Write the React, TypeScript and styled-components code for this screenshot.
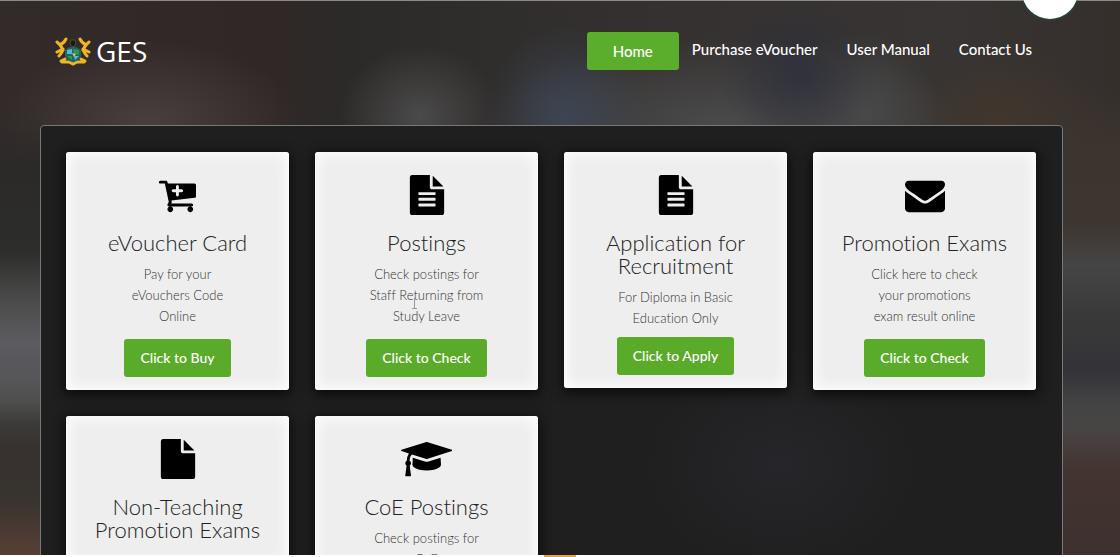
import React from 'react';
import styled, { createGlobalStyle } from 'styled-components';

const GlobalStyle = createGlobalStyle`
  *, *::before, *::after { box-sizing: border-box; }
  body {
    margin: 0;
    background: #fff;
    font-family: Lato, "Open Sans", sans-serif;
    font-variant-ligatures: none;
  }
`;

const Page = styled.div`
  position: relative;
  height: 100vh;
  display: flex;
  flex-direction: column;
  overflow: hidden;
`;

const Backdrop = styled.div`
  flex: 1;
  min-height: 0;
  overflow: hidden;
  padding: 0 57px 0 40px;
  border-top: 1px solid #8d8a85;
  background:
    linear-gradient(180deg, transparent 110px, #2b2a29 170px, #2d2d2c 250px, #4c4b4b 300px, #5b5b60 340px, #57565a 375px, #4f4f4d 400px, #3a3937 425px, #37312f 450px, #38342f 500px, #543d35 545px) left / 42px 100% no-repeat,
    linear-gradient(180deg, transparent 90px, #3c342e 150px, #3d352f 220px, #454545 265px, #3a3a3a 310px, #333338 370px, #454445 405px, #474443 430px, #43342f 470px, #3e312f 540px) right / 59px 100% no-repeat,
    radial-gradient(ellipse 150px 80px at 150px 120px, rgba(78, 68, 68, 0.8), transparent),
    radial-gradient(ellipse 80px 70px at 420px 115px, rgba(82, 82, 82, 0.8), transparent),
    radial-gradient(ellipse 80px 90px at 565px 115px, rgba(62, 72, 90, 0.8), transparent),
    radial-gradient(ellipse 80px 70px at 800px 75px, rgba(44, 46, 60, 0.8), transparent),
    radial-gradient(ellipse 240px 90px at 725px 125px, #4b4b4b, transparent),
    radial-gradient(ellipse 80px 80px at 860px 110px, #484848, transparent),
    radial-gradient(ellipse 110px 80px at 1000px 125px, #42362c, transparent),
    linear-gradient(90deg, #332b29, #302726 24%, #2c2a29 30%, #343130 60%, #373433 85%, #352f2c);
`;

const Header = styled.header`
  display: flex;
  align-items: center;
  justify-content: space-between;
  height: 100px;
  padding: 0 31px 0 15px;
`;

const Brand = styled.a`
  display: flex;
  align-items: center;
  gap: 5px;
  color: #fff;
  font: 28px/38px "Open Sans", sans-serif;
  text-decoration: none;
`;

const Nav = styled.nav`
  display: flex;
  align-items: center;
  gap: 13px;
`;

const NavLinks = styled.div`
  display: flex;
  gap: 29px;
  padding-bottom: 4px;
`;

const NavLink = styled.a<{ $active?: boolean }>`
  color: #fff;
  font-size: 15px;
  font-weight: 500;
  line-height: 38px;
  text-decoration: none;
  ${({ $active }) => $active && 'padding: 0 26px; border-radius: 3px; background: #5aae2c;'}
`;

const ChatBubble = styled.button`
  position: absolute;
  top: -37px;
  right: 42px;
  width: 56px;
  height: 56px;
  padding: 0;
  border: 0;
  border-radius: 50%;
  background: #fff;
  box-shadow: 0 0 3px #0d6b4d;
`;

const Panel = styled.main`
  display: grid;
  grid-template-columns: repeat(4, minmax(0, 1fr));
  align-items: start;
  gap: 26px;
  margin-top: 24px;
  padding: 26px 26px 60px 25px;
  border: 1px solid #7a7877;
  border-radius: 4px;
  background:
    radial-gradient(ellipse 140px 110px at 740px 340px, rgba(45, 45, 54, 0.5), transparent),
    #1f1f1f;
`;

const Card = styled.article`
  position: relative;
  display: flex;
  flex-direction: column;
  align-items: center;
  padding: 23px 24px 13px;
  border-radius: 3px;
  background: #eee;
  box-shadow: inset 0 0 14px 2px #fff, 0 3px 12px 2px #0c0c0c;
  text-align: center;
`;

const CardIcon = styled.svg`
  height: 40px;
  fill: #000;
`;

const Title = styled.h2`
  margin: 16px 0 10px;
  color: #222;
  font-size: 22px;
  font-weight: 300;
  line-height: 23px;
`;

const Text = styled.p<{ $tight?: boolean }>`
  margin: 0 0 ${({ $tight }) => ($tight ? 8 : 12)}px;
  padding: 0 28px;
  color: #333;
  font-size: 13px;
  font-weight: 300;
  line-height: 21px;
`;

const Action = styled.button`
  height: 38px;
  padding: 0 16px;
  border: 0;
  border-radius: 3px;
  background: #5aab29;
  color: #fff;
  font: 500 14px/38px Lato, sans-serif;
  font-variant-ligatures: none;
`;

const Cursor = styled.svg`
  position: absolute;
  top: 146px;
  left: 96px;
  width: 7px;
  height: 11px;
  fill: none;
  stroke: #999;
`;

const FooterEdge = styled.footer`
  height: 2px;
  display: flex;
  justify-content: center;
  background: #fff;
`;

const FooterAccent = styled.span`
  width: 32px;
  background: #e9a243;
`;

const SHEET = 'M1596 476q14 14 28 36h-472v-472q22 14 36 28zm-476 164h544v1056q0 40-28 68t-68 28h-1344q-40 0-68-28t-28-68v-1600q0-40 28-68t68-28h800v544q0 40 28 68t68 28z';
const LINE = 'v-64q0-14-9-23t-23-9h-704q-14 0-23 9t-9 23v64q0 14 9 23t23 9h704q14 0 23-9t9-23z';

const icons = {
  cart: { width: 1920, path: 'M1216 704q0-26-19-45t-45-19h-128v-128q0-26-19-45t-45-19-45 19-19 45v128h-128q-26 0-45 19t-19 45 19 45 45 19h128v128q0 26 19 45t45 19 45-19 19-45v-128h128q26 0 45-19t19-45zm-448 832q0 53-37.500 90.500t-90.500 37.500-90.500-37.500-37.500-90.500 37.500-90.500 90.500-37.500 90.500 37.500 37.500 90.500zm896 0q0 53-37.500 90.500t-90.500 37.500-90.500-37.500-37.500-90.500 37.500-90.500 90.500-37.500 90.500 37.500 37.500 90.500zm128-1088v512q0 24-16 42.500t-41 21.500l-1044 122q1 7 4.500 21.500t6 26.500 2.500 22q0 16-24 64h920q26 0 45 19t19 45-19 45-45 19h-1024q-26 0-45-19t-19-45q0-14 11-39.500t29.500-59.500 20.500-38l-177-823h-204q-26 0-45-19t-19-45 19-45 45-19h256q16 0 28.500 6.500t20 15.500 13 24.500 7.500 26.500 5.500 29.500 4.500 25.500h1201q26 0 45 19t19 45z' },
  fileText: { width: 1792, path: `${SHEET}M1280 1376${LINE}M1280 1120${LINE}M1280 864${LINE}` },
  file: { width: 1792, path: SHEET },
  envelope: { width: 1792, path: 'M1792 710v794q0 66-47 113t-113 47h-1472q-66 0-113-47t-47-113v-794q44 49 101 87 362 246 497 345 57 42 92.500 65.500t94.500 48 110 24.500h2q51 0 110-24.500t94.500-48 92.500-65.500q170-123 498-345 57-39 100-87zm0-294q0 79-49 151t-122 123q-376 261-468 325-10 7-42.500 31t-54 38.500-52 32.500-57.500 27-50 9h-2q-23 0-50-9t-57.500-27-52-32.500-54-38.500-42.500-31q-91-64-262-182.500t-205-142.500q-62-42-117-115.500t-55-136.500q0-78 41.500-130t118.500-52h1472q65 0 112.500 47t47.500 113z' },
  cap: { width: 2304, path: 'M1774 836l18 316q4 69-82 128t-235 93.500-323 34.500-323-34.500-235-93.500-82-128l18-316 574 181q22 7 48 7t48-7zm530-324q0 23-22 31l-1120 352q-4 1-10 1t-10-1l-652-206q-43 34-71 111.500t-34 178.500q63 36 63 109 0 69-58 107l58 433q2 14-8 25-9 11-24 11h-192q-15 0-24-11-10-11-8-25l58-433q-58-38-58-107 0-73 65-111 11-207 98-330l-333-104q-22-8-22-31t22-31l1120-352q4-1 10-1t10 1l1120 352q22 8 22 31z' },
};

interface Service {
  icon: keyof typeof icons;
  title: string;
  text?: string;
  action?: string;
  tight?: boolean;
  cursor?: boolean;
}

const services: Service[] = [
  { icon: 'cart', title: 'eVoucher Card', text: 'Pay for your eVouchers Code Online', action: 'Click to Buy' },
  { icon: 'fileText', title: 'Postings', text: 'Check postings for Staff Returning from Study Leave', action: 'Click to Check', cursor: true },
  { icon: 'fileText', title: 'Application for Recruitment', text: 'For Diploma in Basic Education Only', action: 'Click to Apply', tight: true },
  { icon: 'envelope', title: 'Promotion Exams', text: 'Click here to check your promotions exam result online', action: 'Click to Check' },
  { icon: 'file', title: 'Non-Teaching Promotion Exams' },
  { icon: 'cap', title: 'CoE Postings', text: 'Check postings for CoE' },
];

const Crest = () => (
  <svg width="36" height="30" viewBox="0 0 36 30" aria-hidden="true">
    <g fill="none" stroke="#f2b522" strokeWidth="3" strokeLinecap="round">
      <path d="M11 3Q9 7 6 8M2 6Q6 9 8 14M2 16l6-3M8 14Q6 18 4 20" />
      <path d="M25 3Q27 7 30 8M34 6Q30 9 28 14M34 16l-6-3M28 14Q30 18 32 20" />
      <path d="M6 25l4-2M30 25l-4-2M7 26h7l4 2 4-2h7" />
    </g>
    <path d="M10 14q8-7 16 0v6q-2 5-8 6-6-1-8-6z" fill="#1f656e" />
    <path d="M12 14l5-1v5h-5zM19 20h5l-4 4z" fill="#5fb5d5" />
    <path d="M18 13l6 1v4l-5 1zM12 20h5v4z" fill="#2c9a48" />
    <path d="M17 17l4 1-2 3z" fill="#e9c63c" />
    <path d="M15 8l1-4h4l1 4-3 3z" fill="#191712" stroke="#594d1d" />
  </svg>
);

export default function App() {
  return (
    <>
      <GlobalStyle />
      <Page>
        <Backdrop>
          <Header>
            <Brand href="#"><Crest />GES</Brand>
            <Nav>
              <NavLink $active href="#">Home</NavLink>
              <NavLinks>
                <NavLink href="#">Purchase eVoucher</NavLink>
                <NavLink href="#">User Manual</NavLink>
                <NavLink href="#">Contact Us</NavLink>
              </NavLinks>
            </Nav>
          </Header>
          <Panel>
            {services.map(({ icon, title, text, action, tight, cursor }) => (
              <Card key={title}>
                <CardIcon viewBox={`0 0 ${icons[icon].width} 1792`} fillRule="evenodd" aria-hidden="true">
                  <path d={icons[icon].path} />
                </CardIcon>
                <Title>{title}</Title>
                {text && <Text $tight={tight}>{text}</Text>}
                {action && <Action type="button">{action}</Action>}
                {cursor && (
                  <Cursor viewBox="0 0 7 11" aria-hidden="true"><path d="M3.500 0v10M1 10.500h5" /></Cursor>
                )}
              </Card>
            ))}
          </Panel>
        </Backdrop>
        <FooterEdge><FooterAccent /></FooterEdge>
        <ChatBubble type="button" aria-label="Chat" />
      </Page>
    </>
  );
}
